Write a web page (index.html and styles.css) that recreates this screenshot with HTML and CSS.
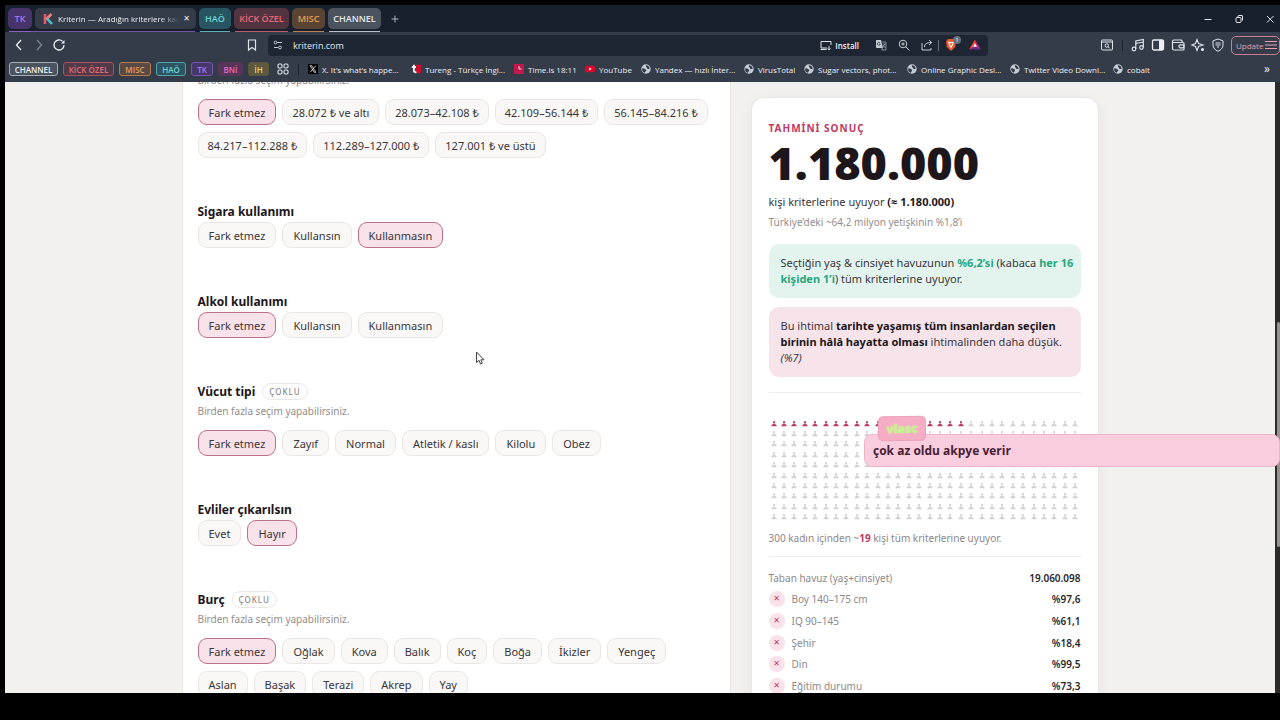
FILE: index.html
```html
<!DOCTYPE html>
<html lang="tr">
<head>
<meta charset="utf-8">
<meta name="viewport" content="width=device-width, initial-scale=1">
<title>Kriterin — Aradığın kriterlere kaç kişi uyuyor?</title>
<link rel="stylesheet" href="styles.css">
</head>
<body>
<svg class="sprite" aria-hidden="true">
  <symbol id="globe" viewBox="0 0 16 16"><circle cx="8" cy="8" r="7.5" fill="#c5cbd3"/><path d="M2 7c3-1 4 1 6 2 1 1-1 3-2 5C3 13 1 10 2 7zM8 2c3 0 5 2 6 5-2 1-3 2-4 0S7 5 8 2z" fill="#343c4a"/></symbol>
  <symbol id="person" viewBox="0 0 8 8"><circle cx="4" cy="2" r="1.5" fill="currentColor"/><path d="M3.200 3.500h1.600v1.200c1.700.3 2.700 1.300 2.700 2.800h-7c0-1.500 1-2.500 2.700-2.800z" fill="currentColor"/></symbol>
</svg>
<div class="window">
  <header class="browser">
    <div class="tabs">
      <button class="tab tab-purple">TK</button>
      <div class="tab tab-active">
        <svg class="icon" viewBox="0 0 12 12" fill="none" stroke-width="2.600"><path d="M3 1v10" stroke="#ef5668"/><path d="M9.500 1L4 6.500" stroke="#ef7a7a"/><path d="M5 5.500L10 11" stroke="#48c7c7"/></svg>
        <span class="tab-title">Kriterin — Aradığın kriterlere kaç</span>
        <button class="close" aria-label="Sekmeyi kapat">✕</button>
      </div>
      <button class="tab tab-teal">HAÖ</button>
      <button class="tab tab-red">KİCK ÖZEL</button>
      <button class="tab tab-orange">MISC</button>
      <button class="tab tab-grey">CHANNEL</button>
      <button class="new-tab" aria-label="Yeni sekme"><svg class="icon" viewBox="0 0 12 12"><path d="M6 2.500v7M2.500 6h7" stroke="#aab3c0"/></svg></button>
      <div class="controls">
        <svg class="icon" viewBox="0 0 12 12"><path d="M2.500 6.500h7" stroke="#e3e6ea"/></svg>
        <svg class="icon" viewBox="0 0 12 12" fill="none" stroke="#e3e6ea"><rect x="3" y="4.500" width="5" height="5" rx="1"/><path d="M5 4V3q0-.5.5-.5H9q.5 0 .5.5v4q0 .5-.5.5"/></svg>
        <svg class="icon" viewBox="0 0 12 12"><path d="M3 3l6.500 6.500M9.500 3L3 9.500" stroke="#e3e6ea"/></svg>
      </div>
    </div>
    <div class="toolbar">
      <div class="nav">
        <svg class="icon-lg" viewBox="0 0 14 14" fill="none" stroke="#eceff3" stroke-width="1.300"><path d="M9 2L4.500 7 9 12"/></svg>
        <svg class="icon-lg" viewBox="0 0 14 14" fill="none" stroke="#7b8493" stroke-width="1.300"><path d="M5 2l4.500 5L5 12"/></svg>
        <svg class="icon-lg" viewBox="0 0 14 14" fill="none" stroke="#eceff3" stroke-width="1.300"><path d="M12 7a5 5 0 1 1-1.500-3.600"/><path d="M9 5.500h3.500V2z" fill="#eceff3" stroke="none"/></svg>
      </div>
      <svg class="icon-lg" viewBox="0 0 14 14" fill="none" stroke="#dfe3e8" stroke-width="1.200"><path d="M3.500 2h7v10L7 9.500 3.500 12z"/></svg>
      <div class="address">
        <svg class="icon" viewBox="0 0 12 12" fill="none" stroke="#c5cbd3"><circle cx="3.500" cy="3.500" r="1.400"/><path d="M5 3.500h5M2 8.500h4"/><circle cx="8" cy="8.500" r="1.400"/></svg>
        <input class="url" type="text" aria-label="Adres" value="kriterin.com">
        <button class="install"><svg class="icon" viewBox="0 0 12 12" fill="none" stroke="#dfe3e8"><path d="M7 9H1V2.500h10V6M.5 10.500h6M9 7v4M7.500 9.500L9 11l1.500-1.500"/></svg>Install</button>
        <svg class="icon" viewBox="0 0 12 12"><path d="M1 1h5l2 8H2q-1 0-1-1z" fill="#c5cbd3"/><path d="M7 3h4v8H6.500l1-2M8 5h2.500M9.500 5c0 2-1 3-2 4M8 6l2.500 3" fill="none" stroke="#9aa2ae" stroke-width=".8"/><path d="M5 3.800a1.500 1.500 0 1 0 .3 1.400H4" fill="none" stroke="#343c4a" stroke-width=".8"/></svg>
        <svg class="icon" viewBox="0 0 12 12" fill="none" stroke="#c5cbd3"><circle cx="5" cy="5" r="3.800"/><path d="M8 8l3.500 3.500M5 3.300v3.400M3.300 5h3.400"/></svg>
        <svg class="icon" viewBox="0 0 12 12" fill="none" stroke="#c5cbd3"><path d="M1 4v7h9V9M3.500 8c0-3 2-4.500 7-4.500M8 1l2.700 2.500L8 6"/></svg>
        <span class="divider"></span>
        <span class="shield"><svg class="icon-lg" viewBox="0 0 14 14"><path d="M4 1h6l2 2.500-.8 5.500L7 13 2.800 9 2 3.500z" fill="#f0562b"/><path d="M4 3.500l2 .5h2l2-.5-.8 3L7 10.500l-2.200-4z" fill="#fff"/><path d="M6 5l1 2.500L8 5" stroke="#f0562b" fill="none"/></svg><span class="count">1</span></span>
        <svg class="icon" viewBox="0 0 14 14"><path d="M7 1l6.500 11H.5z" fill="#c2277d"/><path d="M7 1L.5 12 7 9z" fill="#ff4724"/><path d="M.5 12h13L7 8.500z" fill="#662d91"/><path d="M7 5l2.300 4H4.700z" fill="#fff"/></svg>
      </div>
      <div class="tools">
        <svg class="icon-lg" viewBox="0 0 14 14" fill="none" stroke="#dfe3e8"><rect x="1.500" y="2" width="11" height="10" rx="1"/><path d="M1.500 4h11"/><circle cx="6.800" cy="7.500" r="1.700"/><path d="M8 8.700l1.700 1.700"/></svg>
        <span class="divider dark"></span>
        <svg class="icon-lg" viewBox="0 0 14 14" fill="none" stroke="#dfe3e8" stroke-width="1.200"><circle cx="3" cy="11" r="1.800"/><circle cx="10.500" cy="9.500" r="1.800"/><path d="M4.800 11V3l7.500-1.500v8M4.800 5.500L12.300 4"/></svg>
        <svg class="icon-lg" viewBox="0 0 14 14"><rect x="1.500" y="2" width="11" height="10" rx="1.500" fill="none" stroke="#eceff3" stroke-width="1.300"/><path d="M8 2h4.500v10H8z" fill="#eceff3"/></svg>
        <svg class="icon-lg" viewBox="0 0 14 14" fill="none" stroke="#dfe3e8" stroke-width="1.200"><path d="M11 4.500V3q0-1-1-1H3Q1.500 2 1.500 3.500v7Q1.500 12 3 12h9q1 0 1-1V5.500q0-1-1-1H2"/><rect x="8" y="6.800" width="5" height="3" rx="1.200"/></svg>
        <svg class="icon-lg" viewBox="0 0 14 14" fill="none" stroke="#dfe3e8" stroke-width="1.100"><path d="M6 1.500L7.500 5.500 12 7 7.500 8.500 6 12.500 4.500 8.500.8 7l3.700-1.500z"/><circle cx="11.500" cy="11.500" r="1" fill="#dfe3e8"/></svg>
        <svg class="icon-lg" viewBox="0 0 14 14" fill="none" stroke="#dfe3e8" stroke-width="1"><path d="M7 1l5 1.800V7c0 3-2.200 5-5 6.300C4.200 12 2 10 2 7V2.800z"/><path d="M4.500 5h5M4.500 7h5M6 9h2"/></svg>
      </div>
      <button class="update">Update<svg class="icon" viewBox="0 0 12 12"><path d="M0 2.500h12M0 6h12M0 9.500h12" stroke="#e8a0b4"/></svg></button>
    </div>
    <nav class="bookmarks">
      <button class="tag tag-grey">CHANNEL</button>
      <button class="tag tag-red">KİCK ÖZEL</button>
      <button class="tag tag-orange">MISC</button>
      <button class="tag tag-teal">HAÖ</button>
      <button class="tag tag-purple">TK</button>
      <button class="tag tag-pink">BNİ</button>
      <button class="tag tag-yellow">İH</button>
      <svg class="icon apps" viewBox="0 0 12 12" fill="none" stroke="#dfe3e8" stroke-width="1.100"><rect x="1" y="1" width="4" height="4" rx="1.200"/><rect x="7" y="1" width="4" height="4" rx="1.200"/><rect x="1" y="7" width="4" height="4" rx="1.200"/><rect x="7" y="7" width="4" height="4" rx="1.200"/></svg>
      <span class="divider dark"></span>
      <div class="links">
        <a class="bookmark wide" href="#"><svg class="icon-sm" viewBox="0 0 12 12"><rect width="12" height="12" fill="#000"/><path d="M2.500 2h2l5 8h-2zM9.500 2L2.500 10" fill="none" stroke="#fff" stroke-width=".9"/></svg><span>X. It’s what’s happe...</span></a>
        <a class="bookmark wide" href="#"><svg class="icon-sm" viewBox="0 0 12 12"><path d="M5 1h7v10H5z" fill="#c8102e"/><path d="M3.500 1v7.500q0 1.500 3 1.500M1 3.800h5" fill="none" stroke="#fff" stroke-width="2"/></svg><span>Tureng - Türkçe İngi...</span></a>
        <a class="bookmark time" href="#"><svg class="icon-sm" viewBox="0 0 12 12"><rect width="12" height="12" fill="#c2184e"/><path d="M6 2.500V6h3" fill="none" stroke="#fff"/></svg><span>Time.is 18:11</span></a>
        <a class="bookmark tube" href="#"><svg class="icon-sm" viewBox="0 0 12 12"><rect y="2" width="12" height="8" rx="2" fill="#e0062c"/><path d="M5 4.300v3.400L8 6z" fill="#fff"/></svg><span>YouTube</span></a>
        <a class="bookmark wide" href="#"><svg class="icon-sm"><use href="#globe"/></svg><span>Yandex — hızlı İnter...</span></a>
        <a class="bookmark virus" href="#"><svg class="icon-sm"><use href="#globe"/></svg><span>VirusTotal</span></a>
        <a class="bookmark wide" href="#"><svg class="icon-sm"><use href="#globe"/></svg><span>Sugar vectors, phot...</span></a>
        <a class="bookmark wide" href="#"><svg class="icon-sm"><use href="#globe"/></svg><span>Online Graphic Desi...</span></a>
        <a class="bookmark wide" href="#"><svg class="icon-sm"><use href="#globe"/></svg><span>Twitter Video Downl...</span></a>
        <a class="bookmark" href="#"><svg class="icon-sm"><use href="#globe"/></svg><span>cobalt</span></a>
      </div>
      <button class="more" aria-label="Diğer yer imleri">»</button>
    </nav>
  </header>
  <div class="viewport">
    <main class="page">
      <form class="form-card">
        <section class="field first">
          <p class="hint">Birden fazla seçim yapabilirsiniz.</p>
          <div class="chips amounts"><button type="button" class="chip on">Fark etmez</button><button type="button" class="chip">28.072 ₺ ve altı</button><button type="button" class="chip">28.073–42.108 ₺</button><button type="button" class="chip">42.109–56.144 ₺</button><button type="button" class="chip">56.145–84.216 ₺</button><button type="button" class="chip">84.217–112.288 ₺</button><button type="button" class="chip">112.289–127.000 ₺</button><button type="button" class="chip">127.001 ₺ ve üstü</button></div>
        </section>
        <section class="field">
          <h2 class="title">Sigara kullanımı</h2>
          <div class="chips"><button type="button" class="chip">Fark etmez</button><button type="button" class="chip">Kullansın</button><button type="button" class="chip on">Kullanmasın</button></div>
        </section>
        <section class="field">
          <h2 class="title">Alkol kullanımı</h2>
          <div class="chips"><button type="button" class="chip on">Fark etmez</button><button type="button" class="chip">Kullansın</button><button type="button" class="chip">Kullanmasın</button></div>
        </section>
        <section class="field">
          <h2 class="title">Vücut tipi <span class="badge">ÇOKLU</span></h2>
          <p class="hint">Birden fazla seçim yapabilirsiniz.</p>
          <div class="chips"><button type="button" class="chip on">Fark etmez</button><button type="button" class="chip">Zayıf</button><button type="button" class="chip">Normal</button><button type="button" class="chip">Atletik / kaslı</button><button type="button" class="chip">Kilolu</button><button type="button" class="chip">Obez</button></div>
        </section>
        <section class="field">
          <h2 class="title">Evliler çıkarılsın</h2>
          <div class="chips"><button type="button" class="chip">Evet</button><button type="button" class="chip on">Hayır</button></div>
        </section>
        <section class="field">
          <h2 class="title">Burç <span class="badge">ÇOKLU</span></h2>
          <p class="hint">Birden fazla seçim yapabilirsiniz.</p>
          <div class="chips"><button type="button" class="chip on">Fark etmez</button><button type="button" class="chip">Oğlak</button><button type="button" class="chip">Kova</button><button type="button" class="chip">Balık</button><button type="button" class="chip">Koç</button><button type="button" class="chip">Boğa</button><button type="button" class="chip">İkizler</button><button type="button" class="chip">Yengeç</button><button type="button" class="chip">Aslan</button><button type="button" class="chip">Başak</button><button type="button" class="chip">Terazi</button><button type="button" class="chip">Akrep</button><button type="button" class="chip">Yay</button></div>
        </section>
      </form>
      <aside class="result">
        <div class="eyebrow">TAHMİNİ SONUÇ</div>
        <div class="total">1.180.000</div>
        <p class="lead">kişi kriterlerine uyuyor <b>(≈ 1.180.000)</b></p>
        <p class="sub">Türkiye’deki ~64,2 milyon yetişkinin %1,8’i</p>
        <p class="note green">Seçtiğin yaş &amp; cinsiyet havuzunun <b>%6,2’si</b> (kabaca <b>her 16 kişiden 1’i</b>) tüm kriterlerine uyuyor.</p>
        <p class="note pink">Bu ihtimal <b>tarihte yaşamış tüm insanlardan seçilen birinin hâlâ hayatta olması</b> ihtimalinden daha düşük. <i>(%7)</i></p>
        <div class="crowd-block">
          <div class="crowd" id="crowd"></div>
          <p class="caption">300 kadın içinden ~<b>19</b> kişi tüm kriterlerine uyuyor.</p>
        </div>
        <dl class="breakdown">
          <div class="row"><dt>Taban havuz (yaş+cinsiyet)</dt><dd>19.060.098</dd></div>
          <div class="row"><dt><button class="remove" aria-label="Boy ölçütünü kaldır">✕</button>Boy 140–175 cm</dt><dd>%97,6</dd></div>
          <div class="row"><dt><button class="remove" aria-label="IQ ölçütünü kaldır">✕</button>IQ 90–145</dt><dd>%61,1</dd></div>
          <div class="row"><dt><button class="remove" aria-label="Şehir ölçütünü kaldır">✕</button>Şehir</dt><dd>%18,4</dd></div>
          <div class="row"><dt><button class="remove" aria-label="Din ölçütünü kaldır">✕</button>Din</dt><dd>%99,5</dd></div>
          <div class="row"><dt><button class="remove" aria-label="Eğitim ölçütünü kaldır">✕</button>Eğitim durumu</dt><dd>%73,3</dd></div>
        </dl>
      </aside>
    </main>
    <div class="scrollbar"><div class="thumb"></div></div>
  </div>
</div>
<div class="chat"><span class="author">vlasc</span>çok az oldu akpye verir</div>
<svg class="cursor" viewBox="0 0 10 14"><path d="M1.500 1v10.500L4 9.300 5.500 13l1.800-.8L5.800 8.800H9z" fill="#fff" stroke="#444"/></svg>
<script src="script.js"></script>
</body>
</html>
```
FILE: styles.css
```css
* { box-sizing: border-box; }
body { margin: 0; height: 100vh; background: #000; font-family: "Noto Sans", "Open Sans", sans-serif; font-size: 11px; color: #3a363a; overflow: hidden; }
button { font: inherit; color: inherit; background: none; border: 0; padding: 0; margin: 0; }
h2, p, dl, dd { margin: 0; }
.sprite { display: none; }
.window { height: 100%; padding: 5px 0 27px 5px; display: flex; flex-direction: column; }
.icon-sm { width: 10px; height: 10px; flex: none; }
.icon { width: 12px; height: 12px; flex: none; }
.icon-lg { width: 14px; height: 14px; flex: none; }
.divider { width: 1px; height: 11px; background: #69717e; flex: none; }
.divider.dark { background: #1d2430; }

.browser { background: #343c4a; color: #eceff3; flex: none; font-family: "Open Sans", sans-serif; }
.tabs { height: 27px; display: flex; align-items: stretch; gap: 3px; padding: 0 0 0 3px; background: #18202d; }
.tab { position: relative; display: flex; align-items: center; justify-content: center; margin: 3px 0; font-size: 9px; font-weight: 600; border-radius: 5px; }
.tab::after { content: ""; position: absolute; left: 1px; right: 1px; bottom: -3px; height: 1px; background: currentColor; opacity: .8; }
.tab-purple { width: 24px; background: #46346a; color: #a777e8; }
.tab-active { width: 161px; background: #343c4a; padding: 0 6px 0 7px; gap: 4px; font-size: 8px; font-weight: 400; }
.tab-active::after { left: -26px; background: #8a63c4; }
.tab-title { flex: 1; overflow: hidden; white-space: nowrap; mask-image: linear-gradient(90deg, #000 85%, transparent); }
.close { font-size: 8px; font-family: "DejaVu Sans", sans-serif; }
.tab-teal { width: 32px; background: #285561; color: #6cd5d6; }
.tab-red { width: 55px; background: #523340; color: #e86a78; }
.tab-orange { width: 33px; background: #594434; color: #eb9b55; }
.tab-grey { width: 53px; background: #4b535f; color: #e4e8ed; }
.new-tab { display: flex; align-items: center; padding: 0 5px; }
.controls { margin-left: auto; display: flex; align-items: center; gap: 19px; padding-right: 4px; }

.toolbar { height: 26px; display: flex; align-items: center; }
.nav { display: flex; gap: 6px; padding-left: 7px; flex: 1; max-width: 240px; }
.address { flex: 1; max-width: 720px; height: 21px; margin-left: 9px; padding: 0 7px 0 4px; display: flex; align-items: center; gap: 11px; background: #1e2633; border-radius: 4px; }
.url { flex: 1; min-width: 0; margin-left: -2px; padding: 0; border: 0; background: none; color: #e5e8ec; font: 9px "Open Sans", sans-serif; }
.install { display: flex; align-items: center; gap: 3px; padding-right: 5px; font-size: 8px; font-weight: 600; }
.address .divider { margin: 0 -6px; }
.shield { position: relative; display: flex; }
.count { position: absolute; top: -2px; right: -3px; width: 8px; height: 8px; border-radius: 4px; background: #66707c; font-size: 6px; line-height: 8px; text-align: center; }
.tools { margin-left: auto; display: flex; align-items: center; gap: 6px; padding-right: 6px; }
.tools .divider { margin: 0 2px; }
.update { height: 19px; width: 49px; padding: 0 2px 0 4px; border: 1px solid #c98095; border-radius: 5px; color: #e8a0b4; display: flex; align-items: center; gap: 2px; font-size: 8px; flex: none; }

.bookmarks { height: 24px; display: flex; align-items: center; padding: 0 10px 2px 4px; gap: 5px; font-size: 8px; }
.tag { height: 14px; border: 1px solid; border-radius: 3px; display: flex; align-items: center; justify-content: center; font-weight: 600; flex: none; }
.tag-grey { width: 49px; background: #4b535f; border-color: #a5acb5; }
.tag-red { width: 51px; background: #523b49; border-color: #a94f5d; color: #e86a78; }
.tag-orange { width: 32px; background: #594a45; border-color: #b57a48; color: #eb9b55; }
.tag-teal { width: 30px; background: #2c5561; border-color: #4fa5aa; color: #6cd5d6; }
.tag-purple { width: 22px; background: #46386a; border-color: #7a55b0; color: #a777e8; }
.tag-pink { width: 25px; background: #563558; border-color: #563558; color: #e06cc6; }
.tag-yellow { width: 21px; background: #5c593e; border-color: #5c593e; color: #e3d75b; }
.apps { margin: 0 4px 0 3px; }
.links { display: flex; flex: 1; padding-left: 4px; min-width: 0; overflow: hidden; }
.bookmark { display: flex; align-items: center; gap: 4px; color: #eceff3; text-decoration: none; white-space: nowrap; flex: none; }
.bookmark.wide { width: 103px; }
.bookmark.time { width: 71px; }
.bookmark.tube { width: 56px; }
.bookmark.virus { width: 60px; }
.more { font-size: 12px; line-height: 12px; }

.viewport { flex: 1; min-height: 0; display: flex; background: #f2f1ee; overflow: hidden; }
.page { flex: 1; max-width: 915px; margin: 0 auto; display: grid; grid-template-columns: minmax(0, 1fr) 346px; gap: 22px; }
.form-card { background: #fff; padding: 0 15px; box-shadow: 0 0 0 1px #e8e6e2; }
.field { margin-bottom: 43px; }
.field.first { margin-top: -12px; }
.title { display: flex; align-items: center; gap: 7px; height: 21px; font-size: 12px; font-weight: 700; color: #1b161a; }
.badge { height: 17px; padding: 0 6px; border: 1px solid #e9e7e5; border-radius: 9px; font-size: 8px; line-height: 15px; font-weight: 500; letter-spacing: 1px; color: #8c888b; }
.hint { margin-bottom: 9px; font-size: 10px; line-height: 20px; color: #918d90; }
.title + .hint { margin-top: -1px; }
.chips { display: flex; flex-wrap: wrap; gap: 7px 6px; }
.chip { height: 26px; padding: 0 10px; border: 1px solid #e9e7e4; border-radius: 9px; background: #f9f8f6; color: #3a363a; white-space: nowrap; }
.chip.on { background: #f9e2ea; border-color: #bf7089; }
.amounts .chip:not(.on) { padding: 0 9px; }

.result { align-self: start; margin-top: 16px; padding: 20px 17px; background: #fff; border-radius: 12px; box-shadow: 0 0 0 1px #e9e7e4, 0 4px 16px rgba(0, 0, 0, .05); }
.eyebrow { line-height: 20px; font-size: 10px; font-weight: 700; letter-spacing: 1px; color: #bd3a62; }
.total { height: 54px; line-height: 50px; font-family: "Open Sans", sans-serif; font-weight: 800; font-size: 45px; color: #1d171b; }
.lead { line-height: 20px; }
.lead b, .pink b { color: #1b161a; }
.sub { line-height: 20px; font-size: 10px; color: #918d90; }
.note { margin-top: 9px; padding: 11px 5px 11px 12px; border-radius: 10px; line-height: 16px; }
.note.green { margin-top: 12px; }
.green { background: #e3f4ef; }
.green b { color: #2aa67f; }
.pink { background: #f7e3ea; }
.crowd-block { margin-top: 15px; padding: 25px 0 8px; border-top: 1px solid #efeeec; border-bottom: 1px solid #efeeec; }
.crowd { height: 104px; display: grid; grid-template-columns: repeat(30, 1fr); grid-auto-rows: 1fr; align-items: center; justify-items: center; }
.person { width: 6px; height: 7px; color: #d3d1d2; }
.person.match { color: #bd3a62; }
.caption { margin-top: 6px; line-height: 20px; font-size: 10px; color: #8c888b; }
.caption b { color: #bd3a62; }
.breakdown { height: 130px; margin-top: 10px; display: grid; grid-auto-rows: 1fr; font-size: 10px; }
.row { display: flex; align-items: center; justify-content: space-between; color: #8c888b; }
.row dt { display: flex; align-items: center; gap: 7px; }
.row dd { color: #2b262a; font-weight: 600; }
.remove { width: 16px; height: 16px; border-radius: 8px; background: #f9e2ea; color: #bd3a62; font: 8px/14px "DejaVu Sans", sans-serif; }
.scrollbar { width: 5px; background: #2d2a28; padding-top: 240px; }
.thumb { width: 3px; height: 225px; margin-left: 2px; background: #98938f; border-radius: 2px; }

.chat { position: absolute; left: 864px; right: 0; top: 434px; height: 33px; padding-left: 8px; border-radius: 8px; border: 1px solid #ebb5ca; background: #f9cddd; color: #472034; font: 700 12px/31px "Open Sans", sans-serif; }
.author { position: absolute; left: 13px; top: -19px; width: 48px; height: 25px; border: 1px solid #e9a3bb; border-radius: 5px; background: #f5adc5; color: #c8f08e; text-align: center; line-height: 23px; font-weight: 800; transform: rotate(-1deg); text-shadow: 0 0 2px #d9f5a5; }
.cursor { position: absolute; left: 475px; top: 351px; width: 10px; height: 14px; }
```
FILE: script.js
```js
const crowd = document.getElementById("crowd");
const TOTAL = 300;
const MATCHES = 19;
let people = "";
for (let i = 0; i < TOTAL; i++) {
  people += `<svg class="person${i < MATCHES ? " match" : ""}"><use href="#person"/></svg>`;
}
crowd.innerHTML = people;
```
